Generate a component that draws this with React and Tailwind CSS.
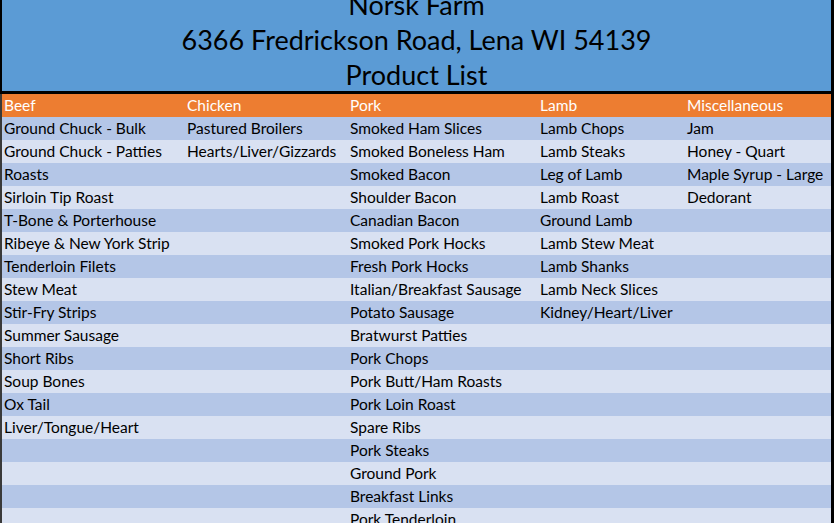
import React from "react";

const columns = [
  {
    name: "Beef",
    items: [
      "Ground Chuck - Bulk",
      "Ground Chuck - Patties",
      "Roasts",
      "Sirloin Tip Roast",
      "T-Bone & Porterhouse",
      "Ribeye & New York Strip",
      "Tenderloin Filets",
      "Stew Meat",
      "Stir-Fry Strips",
      "Summer Sausage",
      "Short Ribs",
      "Soup Bones",
      "Ox Tail",
      "Liver/Tongue/Heart",
    ],
  },
  { name: "Chicken", items: ["Pastured Broilers", "Hearts/Liver/Gizzards"] },
  {
    name: "Pork",
    items: [
      "Smoked Ham Slices",
      "Smoked Boneless Ham",
      "Smoked Bacon",
      "Shoulder Bacon",
      "Canadian Bacon",
      "Smoked Pork Hocks",
      "Fresh Pork Hocks",
      "Italian/Breakfast Sausage",
      "Potato Sausage",
      "Bratwurst Patties",
      "Pork Chops",
      "Pork Butt/Ham Roasts",
      "Pork Loin Roast",
      "Spare Ribs",
      "Pork Steaks",
      "Ground Pork",
      "Breakfast Links",
      "Pork Tenderloin",
      "Ground Pork Patties",
    ],
  },
  {
    name: "Lamb",
    items: [
      "Lamb Chops",
      "Lamb Steaks",
      "Leg of Lamb",
      "Lamb Roast",
      "Ground Lamb",
      "Lamb Stew Meat",
      "Lamb Shanks",
      "Lamb Neck Slices",
      "Kidney/Heart/Liver",
    ],
  },
  {
    name: "Miscellaneous",
    items: ["Jam", "Honey - Quart", "Maple Syrup - Large", "Dedorant"],
  },
];

const rowCount = Math.max(...columns.map((c) => c.items.length));

export default function App() {
  const rows = Array.from({ length: rowCount }, (_, i) =>
    columns.map((c) => c.items[i] || "")
  );

  return (
    <div
      className="w-[834px] h-[523px] overflow-hidden bg-white"
      style={{ fontFamily: "Lato, 'Open Sans', sans-serif" }}
    >
      <div className="border-r-[3px] border-black">
        {/* title block, scrolled so the first line is cut off */}
        <div className="h-[94px] bg-[#5b9bd5] border-l-2 border-b-[3px] border-black overflow-hidden">
          <div className="-mt-[13px] flex flex-col items-center text-[27px] leading-[35px] text-black">
            <div>Norsk Farm</div>
            <div>6366 Fredrickson Road, Lena WI 54139</div>
            <div>Product List</div>
          </div>
        </div>

        <div className="border-l-2 border-[#3a3a3a] text-[15.5px]">
          <div className="grid grid-cols-[183px_163px_190px_147px_1fr] h-[23px] items-center bg-[#ed7d31] text-white">
            {columns.map((c) => (
              <div key={c.name} className="pl-[2px] whitespace-nowrap">
                {c.name}
              </div>
            ))}
          </div>
          {rows.map((row, i) => (
            <div
              key={i}
              className={`grid grid-cols-[183px_163px_190px_147px_1fr] h-[23px] items-center text-black ${
                i % 2 === 0 ? "bg-[#b4c6e7]" : "bg-[#d9e1f2]"
              }`}
            >
              {row.map((cell, j) => (
                <div key={j} className="pl-[2px] whitespace-nowrap">
                  {cell}
                </div>
              ))}
            </div>
          ))}
        </div>
      </div>
    </div>
  );
}
